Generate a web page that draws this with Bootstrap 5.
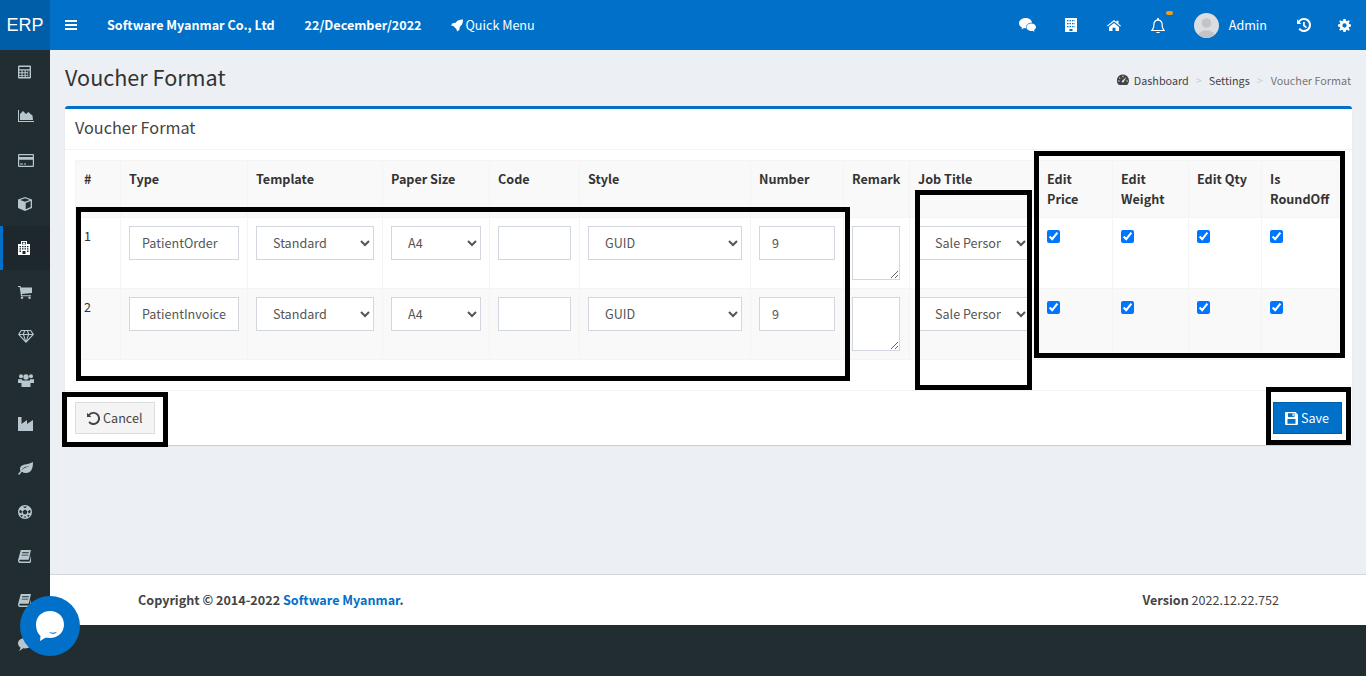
<!DOCTYPE html>
<html lang="en">
<head>
    <meta charset="UTF-8">
    <meta name="viewport" content="width=device-width, initial-scale=1.0">
    <title>Voucher Format</title>
    <link href="https://cdn.jsdelivr.net/npm/bootstrap@5.3.0/dist/css/bootstrap.min.css" rel="stylesheet">
    <style>
        html, body { height: 100%; }
        body { background: #222d32; color: #333; overflow: hidden; position: relative; font: 12.6px/20px "Noto Sans CJK JP", "Open Sans", sans-serif; }
        svg.ico { fill: currentColor; display: block; flex: none; }

        .top-bar { height: 50px; background: #0070c9; color: #fff; }
        .top-brand { width: 50px; background: #005ea8; font: 18px/50px "Liberation Sans", sans-serif; text-align: center; }
        .top-text { font-weight: 700; }
        .top-menu { margin-left: 15px; margin-right: 30px; }
        .top-company { margin-right: 30px; }
        .top-date { margin-right: 29px; }
        .top-quick { gap: 3px; }
        .top-right { margin-left: auto; padding-right: 15px; }
        .top-gap { margin-right: 30px; }
        .top-gap-s { margin-right: 29px; }
        .top-gap-xs { margin-right: 27px; }
        .top-avatar { width: 25px; height: 25px; border-radius: 50%; overflow: hidden; margin-right: 10px; }
        .top-dot { position: absolute; width: 7px; height: 4px; border-radius: 2px; background: #f39c12; top: -7px; left: 15px; }

        .side-bar { width: 50px; flex: none; background: #222d32; color: #b8c7ce; }
        .side-item { height: 44px; display: flex; align-items: center; border-left: 3px solid transparent; padding-left: 15px; }
        .side-item.is-on { background: #1e282c; border-left-color: #0070c9; color: #fff; }

        .page-area { height: 524px; background: #ecf0f5; padding: 0 15px; }
        .page-head { height: 56px; }
        .page-title { font-size: 21.6px; line-height: 28px; margin: -3px 0 0; color: #333; font-weight: 400; }
        .crumbs { font-size: 10.8px; line-height: 16px; color: #444; margin: 3px 1px 0 0; }
        .crumbs svg { margin-right: 5px; }
        .crumbs i { font-style: normal; color: #ccc; margin: 0 7px; }
        .crumbs i:last-of-type { margin-right: 8px; }
        .crumbs .now { color: #777; }

        .vf-card { border: 0; border-top: 3px solid #0070c9; border-radius: 3px 3px 0 0; box-shadow: 0 1px 1px rgba(0,0,0,.15); }
        .vf-card .card-header { background: #fff; border-bottom: 1px solid #f4f4f4; padding: 8px 10px 11px; height: 41px; font-size: 16.2px; line-height: 20px; color: #444; border-radius: 0; }
        .vf-card .card-body { padding: 10px 10px 30px; height: 240px; }
        .vf-card .card-footer { background: #fff; border-top: 1px solid #f4f4f4; padding: 11px 10px 10px; height: 55px; border-radius: 0; }

        .vf-table { table-layout: fixed; width: 1266px; margin: 0; border-color: #f4f4f4; color: #333; }
        .vf-table > :not(caption) > * > * { padding: 8px; border-color: #f4f4f4; vertical-align: top; background: transparent; box-shadow: none; color: #333; }
        .vf-table thead th { background: #f9f9f9; font-weight: 700; line-height: 20px; }
        .vf-table tbody tr:nth-child(even) td { background: #f9f9f9; }
        .vf-table td { line-height: 20px; }
        .vf-input { display: block; width: 100%; height: 34px; border: 1px solid #d2d6de; border-radius: 0; padding: 5px 12px 7px; font: inherit; color: #555; background-color: #fff; box-shadow: none; }
        select.vf-input { appearance: auto; -webkit-appearance: auto; background-image: none; }
        textarea.vf-input { width: 48px; height: 54px; padding: 6px 12px; }
        .vf-check { display: block; margin: 4px 0 0 0; width: 13px; height: 13px; }

        .vf-btn { height: 32px; padding: 5px 12px 5px 11px; border-radius: 0; font-size: 12.6px; line-height: 20px; display: inline-flex; align-items: center; gap: 3px; }
        .vf-cancel { background: #f4f4f4; border: 1px solid #ddd; color: #444; }
        .vf-save { background: #0070c9; border: 1px solid #005ea8; color: #fff; }

        .foot-bar { height: 51px; background: #fff; border-top: 1px solid #d2d6de; padding: 15px 88px; color: #444; }
        .foot-bar a { color: #0070c9; text-decoration: none; }

        .mark-box { position: absolute; border: 5px solid #000; pointer-events: none; }
        .chat-bubble { position: absolute; left: 20px; top: 596px; width: 60px; height: 60px; border-radius: 50%; background: #0070c9; display: flex; align-items: center; justify-content: center; }
    </style>
</head>
<body>
    <svg width="0" height="0" class="position-absolute">
        <symbol id="i-calc" viewBox="0 0 14 14"><path fill-rule="evenodd" d="M1 0h12a1 1 0 0 1 1 1v12a1 1 0 0 1-1 1H1a1 1 0 0 1-1-1V1a1 1 0 0 1 1-1zM1.500 1.500V4h11V1.500zM1.500 5.300v2h2.200v-2zM4.900 5.300v2h2.200v-2zM8.300 5.300v2h2v-2zM11 5.300v7h1.500v-7zM1.500 8.300v1.900h2.200V8.300zM4.900 8.300v1.900h2.200V8.300zM8.300 8.300v1.900h2V8.300zM1.500 11.100v1.400h2.200v-1.400zM4.900 11.100v1.400h2.200v-1.400zM8.300 11.100v1.400h2v-1.400z"/></symbol>
        <symbol id="i-area" viewBox="0 0 16 12"><path d="M0 0h1v11h15v1H0z"/><path d="M2 10V4l3-3 3 3 2.500-2L12.500 4l2 1.500.5 4.500z"/></symbol>
        <symbol id="i-card" viewBox="0 0 16 13"><path fill-rule="evenodd" d="M1 0h14a1 1 0 0 1 1 1v11a1 1 0 0 1-1 1H1a1 1 0 0 1-1-1V1a1 1 0 0 1 1-1zM1.200 1.200V3h13.600V1.200zM1.200 5.800v6h13.600v-6zM2 9.500h3v1H2zM6 9.500h2v1H6z"/></symbol>
        <symbol id="i-cube" viewBox="0 0 14 14"><path fill-rule="evenodd" d="M7 0l7 2.500V11l-7 3-7-3V2.500zM2.200 3L7 4.800 11.800 3 7 1.300zM7.700 12.200l5-2.100V4l-5 1.900z"/></symbol>
        <symbol id="i-hosp" viewBox="0 0 12 14"><path fill-rule="evenodd" d="M3 0h6v3h3v11H0V3h3zM4 1v2.600h4V1zM5.500 1.300h1v.8h.8v.8h-.8v.6h-1v-.6h-.8v-.8h.8zM1.500 5v1.300H3V5zM4 5v1.300h1.500V5zM6.500 5v1.300H8V5zM9 5v1.300h1.500V5zM1.500 7.300v1.300H3V7.300zM4 7.300v1.300h1.500V7.300zM6.500 7.300v1.300H8V7.300zM9 7.300v1.300h1.500V7.300zM1.500 9.600v1.300H3V9.600zM9 9.600v1.300h1.500V9.600zM4.500 10v3h3v-3z"/></symbol>
        <symbol id="i-cart" viewBox="0 0 14 13"><path d="M0 0h2.500L3 1.500h11V7L3.800 8l.3 1.200H13v1H3L1.700 1H0z"/><circle cx="4" cy="11.800" r="1.200"/><circle cx="11.500" cy="11.800" r="1.200"/></symbol>
        <symbol id="i-gem" viewBox="0 0 16 13"><path fill-rule="evenodd" d="M3 0h10l3 4.500L8 13 0 4.500zM3.600 1L1.700 4h3L6 1zM7.200 1L6 4h4L8.800 1zM10 1l1.300 3h3L12.400 1zM2 5l4.800 5L5 5zM6.200 5L8 10.800 9.800 5zM11 5l-1.800 5L14 5z"/></symbol>
        <symbol id="i-users" viewBox="0 0 16 13"><circle cx="3" cy="2.300" r="2"/><circle cx="13" cy="2.300" r="2"/><circle cx="8" cy="3" r="2.700"/><path d="M0 5.300h4L4.600 8l-1 1H0zM12 5.300h4V9h-3.600l-1-1zM4.500 6.500h7L12.500 9v4h-9V9z"/></symbol>
        <symbol id="i-ind" viewBox="0 0 15 14"><path d="M0 0h3.500v7L9 3v4l6-4v11H0z"/></symbol>
        <symbol id="i-leaf" viewBox="0 0 15 13"><path fill-rule="evenodd" d="M15 0c0 7-2 11-7 11-1.500 0-3-.4-4.200-1.200L1.200 13 0 12l2.600-3C2 8.200 1.800 7 2.200 5.800 3.300 2 9 3 15 0zM3.400 8.400C6 5.800 8 5 11 4.700 8 4 5 5.500 3.400 8.400z"/></symbol>
        <symbol id="i-ball" viewBox="0 0 14 14"><path fill-rule="evenodd" d="M7 0a7 7 0 1 1 0 14A7 7 0 0 1 7 0zM7 4.500L4.600 6.300l.9 2.900h3l.9-2.900zM5 1.800L7 3.300l2-1.500C7.700 1.300 6.300 1.300 5 1.800zM1.300 7.300l2 1.400.8-2.400-2-1.500c-.6.800-.8 1.700-.8 2.500zM12.700 7.300c0-.8-.2-1.700-.8-2.500l-2 1.500.8 2.400zM4 12.200l.7-2.300H2.300c.4 1 1 1.800 1.700 2.300zM10 12.200c.7-.5 1.300-1.300 1.700-2.300H9.300zM5.500 12.600h3L7 11z"/></symbol>
        <symbol id="i-book" viewBox="0 0 14 14"><path fill-rule="evenodd" d="M3 0h11l-2.500 10.500H3c-1 0-1.500.4-1.500 1s.5 1 1.500 1h9.500L14 6v6.500l-.8 1.500H3c-2 0-3-1-3-2.500 0-.6.100-1 .3-1.500zM4.500 2.500v1h7v-1zM4 5v1h7V5z"/></symbol>
        <symbol id="i-comment" viewBox="0 0 14 13"><path d="M7 0c3.900 0 7 2.300 7 5.200s-3.100 5.200-7 5.200c-.6 0-1.200 0-1.700-.1C4 11.500 2.300 12.500.8 13c1-1.100 1.600-2.200 1.700-3.500C1 8.500 0 7 0 5.200 0 2.300 3.100 0 7 0z"/></symbol>
        <symbol id="i-bars" viewBox="0 0 12 10"><path d="M0 0h12v2H0zM0 4h12v2H0zM0 8h12v2H0z"/></symbol>
        <symbol id="i-rocket" viewBox="0 0 13 13"><path d="M13 0c.2 3.500-1 6-3.500 8l-.5 3.300L6.500 13 6 10.500 2.500 7 0 6.500 1.700 4 5 3.500C7 1 9.500-.2 13 0z"/></symbol>
        <symbol id="i-wechat" viewBox="0 0 17 14"><path d="M6.500 0C10 0 12.800 2.100 13 4.700c-3.300-.2-6 1.800-6 4.400 0 .4.100.8.200 1.200-.8.100-1.500 0-2.200-.2L2.500 11.500l.5-2C1.200 8.500 0 7 0 5.200 0 2.300 2.900 0 6.500 0z"/><path d="M12.500 5.500c2.500 0 4.500 1.600 4.500 3.600 0 1.200-.8 2.300-2 3l.4 1.600-2-1c-3.200.8-6-1-6-3.600 0-2 2-3.600 4.600-3.600z"/></symbol>
        <symbol id="i-bldg" viewBox="0 0 12 14"><path fill-rule="evenodd" d="M0 0h12v14H0zM2 2v1.300h1.500V2zM4.500 2v1.300H6V2zM7 2v1.300h1.500V2zM9.500 2v1.300H10V2zM2 5v1.300h1.500V5zM4.500 5v1.300H6V5zM7 5v1.300h1.500V5zM9.500 5v1.300H10V5zM2 8v1.300h1.500V8zM4.500 8v1.300H6V8zM7 8v1.300h1.500V8zM9.500 8v1.300H10V8zM4.500 11v2h3v-2z"/></symbol>
        <symbol id="i-home" viewBox="0 0 14 11"><path d="M7 0l2.500 2V.7h2v3L14 5.800l-.7.7L7 1.500.7 6.500 0 5.800zM2 7l5-4 5 4v4H8.500V7.800h-3V11H2z"/></symbol>
        <symbol id="i-bell" viewBox="0 0 14 15"><path fill-rule="evenodd" d="M7 0c.6 0 1 .4 1 1v.6c2.300.5 3.700 2.400 3.700 4.700 0 3.100.7 4.400 2.300 6.200v.5H0v-.5c1.600-1.800 2.300-3.100 2.300-6.200 0-2.300 1.400-4.200 3.700-4.700V1c0-.6.400-1 1-1zM7 2.700c-2.100 0-3.500 1.500-3.500 3.600 0 2.600-.4 4.400-1.700 5.800h10.400c-1.300-1.400-1.700-3.200-1.700-5.800 0-2.100-1.400-3.600-3.500-3.600zM5 14h4c0 .7-.8 1-2 1s-2-.3-2-1z"/></symbol>
        <symbol id="i-hist" viewBox="0 0 14 14"><path d="M7 0a7 7 0 1 1-5.500 11.300L3 10A5 5 0 1 0 2.600 4.500L4.500 6H0V1.200l1.300 1.500A7 7 0 0 1 7 0zM6 4h1.800v3.300L10 9l-1 1.200L6 8z"/></symbol>
        <symbol id="i-gear" viewBox="0 0 14 14"><path fill-rule="evenodd" d="M5.800 0h2.400l.4 2 1.100.5 1.800-1.200 1.200 1.200-1.200 1.900.5 1.100 2 .3v2.400l-2 .4-.5 1.100 1.200 1.800-1.200 1.200-1.800-1.200-1.100.5-.4 2H5.800l-.4-2-1.100-.5-1.800 1.200-1.200-1.200 1.200-1.800-.5-1.100-2-.4V5.800l2-.3.500-1.100-1.200-1.900 1.200-1.200 1.800 1.200 1.100-.5zM7 4.700a2.300 2.300 0 1 0 0 4.600 2.300 2.300 0 0 0 0-4.600z"/></symbol>
        <symbol id="i-dash" viewBox="0 0 13 12"><path fill-rule="evenodd" d="M6.500 0A6.500 6.500 0 0 1 13 6.500c0 2-.8 3.800-2.200 5H2.200A6.500 6.500 0 0 1 6.500 0zM6 1.500V3h1V1.500zM2.800 3l-.7.700 1 1 .7-.7zM10.200 3L7.400 7.500a1 1 0 1 1-1.500-.9zM1.300 6.500v1h1.500v-1zM10.200 6.500v1h1.500v-1z"/></symbol>
        <symbol id="i-undo" viewBox="0 0 14 14"><path d="M7 0a7 7 0 1 1-5.500 11.300L3 10A5 5 0 1 0 3 3.800l1.700 1.700H0V.8l1.600 1.600A7 7 0 0 1 7 0z"/></symbol>
        <symbol id="i-save" viewBox="0 0 13 13"><path fill-rule="evenodd" d="M1 0h9.500L13 2.500V12a1 1 0 0 1-1 1H1a1 1 0 0 1-1-1V1a1 1 0 0 1 1-1zM3 1.200V5h6.500V1.200zM7.500 1.700h1.300v2.600H7.500zM2.500 7v4.800h8V7z"/></symbol>
    </svg>

    <header class="top-bar d-flex align-items-center">
        <div class="top-brand">ERP</div>
        <svg class="ico top-menu" width="12" height="10"><use href="#i-bars"/></svg>
        <span class="top-text top-company">Software Myanmar Co., Ltd</span>
        <span class="top-text top-date">22/December/2022</span>
        <span class="d-flex align-items-center top-quick"><svg class="ico" width="12" height="13"><use href="#i-rocket"/></svg>Quick Menu</span>
        <div class="top-right d-flex align-items-center">
            <svg class="ico top-gap-s" width="17" height="14"><use href="#i-wechat"/></svg>
            <svg class="ico top-gap" width="12" height="14"><use href="#i-bldg"/></svg>
            <svg class="ico top-gap" width="14" height="11"><use href="#i-home"/></svg>
            <span class="position-relative top-gap-s"><svg class="ico" width="14" height="15"><use href="#i-bell"/></svg><span class="top-dot"></span></span>
            <svg class="top-avatar" viewBox="0 0 25 25"><rect width="25" height="25" fill="#dcdde0"/><circle cx="12.500" cy="10" r="4.800" fill="#c3c4c8"/><path d="M3 25c.5-5 4-6.500 7-7.500h5c3 1 6.500 2.500 7 7.500z" fill="#c3c4c8"/></svg>
            <span class="top-gap">Admin</span>
            <svg class="ico top-gap-xs" width="14" height="14"><use href="#i-hist"/></svg>
            <svg class="ico" width="13" height="13"><use href="#i-gear"/></svg>
        </div>
    </header>

    <div class="d-flex">
        <nav class="side-bar">
            <div class="side-item"><svg class="ico" width="13" height="14"><use href="#i-calc"/></svg></div>
            <div class="side-item"><svg class="ico" width="16" height="12"><use href="#i-area"/></svg></div>
            <div class="side-item"><svg class="ico" width="16" height="13"><use href="#i-card"/></svg></div>
            <div class="side-item"><svg class="ico" width="14" height="14"><use href="#i-cube"/></svg></div>
            <div class="side-item is-on"><svg class="ico" width="12" height="14"><use href="#i-hosp"/></svg></div>
            <div class="side-item"><svg class="ico" width="14" height="13"><use href="#i-cart"/></svg></div>
            <div class="side-item"><svg class="ico" width="16" height="13"><use href="#i-gem"/></svg></div>
            <div class="side-item"><svg class="ico" width="16" height="13"><use href="#i-users"/></svg></div>
            <div class="side-item"><svg class="ico" width="15" height="14"><use href="#i-ind"/></svg></div>
            <div class="side-item"><svg class="ico" width="15" height="13"><use href="#i-leaf"/></svg></div>
            <div class="side-item"><svg class="ico" width="14" height="14"><use href="#i-ball"/></svg></div>
            <div class="side-item"><svg class="ico" width="13" height="13"><use href="#i-book"/></svg></div>
            <div class="side-item"><svg class="ico" width="13" height="13"><use href="#i-book"/></svg></div>
            <div class="side-item"><svg class="ico" width="14" height="13"><use href="#i-comment"/></svg></div>
        </nav>

        <div class="flex-grow-1">
            <main class="page-area">
                <div class="page-head d-flex justify-content-between align-items-center">
                    <h1 class="page-title">Voucher Format</h1>
                    <div class="crumbs d-flex align-items-center">
                        <svg class="ico" width="12" height="12"><use href="#i-dash"/></svg><span>Dashboard</span><i>&gt;</i><span>Settings</span><i>&gt;</i><span class="now">Voucher Format</span>
                    </div>
                </div>
                <div class="card vf-card">
                    <div class="card-header">Voucher Format</div>
                    <div class="card-body">
                        <table class="table table-bordered vf-table">
                            <colgroup id="vfCols"></colgroup>
                            <thead>
                                <tr>
                                    <th>#</th><th>Type</th><th>Template</th><th>Paper Size</th><th>Code</th><th>Style</th><th>Number</th><th>Remark</th><th>Job Title</th>
                                    <th>Edit Price</th><th>Edit Weight</th><th>Edit Qty</th><th>Is RoundOff</th>
                                </tr>
                            </thead>
                            <tbody id="vfRows"></tbody>
                        </table>
                    </div>
                    <div class="card-footer d-flex justify-content-between">
                        <button class="btn vf-btn vf-cancel"><svg class="ico" width="13" height="13"><use href="#i-undo"/></svg>Cancel</button>
                        <button class="btn vf-btn vf-save"><svg class="ico" width="13" height="13"><use href="#i-save"/></svg>Save</button>
                    </div>
                </div>
            </main>
            <footer class="foot-bar d-flex justify-content-between">
                <div><b>Copyright © 2014-2022 <a href="#">Software Myanmar</a>.</b></div>
                <div><b>Version</b> 2022.12.22.752</div>
            </footer>
        </div>
    </div>

    <div class="mark-box" style="left:76px;top:207px;width:774px;height:174px"></div>
    <div class="mark-box" style="left:915px;top:190px;width:117px;height:200px"></div>
    <div class="mark-box" style="left:1034px;top:151px;width:311px;height:207px"></div>
    <div class="mark-box" style="left:62px;top:392px;width:106px;height:55px"></div>
    <div class="mark-box" style="left:1266px;top:387px;width:85px;height:58px"></div>

    <div class="chat-bubble">
        <svg width="30" height="32" viewBox="0 0 30 32"><path d="M15 1c8 0 14 5.600 14 13.500S23 28 15 28c-2 0-3.500-.3-5 0l-5 3 .500-5C2.500 23.500 1 19.500 1 14.500 1 6.600 7 1 15 1z" fill="#fff"/><path d="M14 22c2.500 1 5.500.8 8-.3-1 2.300-6 3-8 .3z" fill="#0070c9"/></svg>
    </div>

    <script>
        const colWidths = [45, 127, 135, 107, 90, 171, 93, 66, 129, 74, 76, 73, 80];
        const vouchers = ["PatientOrder", "PatientInvoice"];

        document.getElementById("vfCols").innerHTML = colWidths.map(w => `<col style="width:${w}px">`).join("");

        document.getElementById("vfRows").innerHTML = vouchers.map((name, i) => `
            <tr>
                <td>${i + 1}</td>
                <td><input class="vf-input" value="${name}"></td>
                <td><select class="vf-input"><option>Standard</option></select></td>
                <td><select class="vf-input"><option>A4</option></select></td>
                <td><input class="vf-input"></td>
                <td><select class="vf-input"><option>GUID</option></select></td>
                <td><input class="vf-input" value="9"></td>
                <td><textarea class="vf-input"></textarea></td>
                <td><select class="vf-input"><option>Sale Person</option></select></td>
                ${"<td><input class='vf-check' type='checkbox' checked></td>".repeat(4)}
            </tr>`).join("");
    </script>

    <script src="https://cdn.jsdelivr.net/npm/bootstrap@5.3.0/dist/js/bootstrap.bundle.min.js"></script>
</body>
</html>
